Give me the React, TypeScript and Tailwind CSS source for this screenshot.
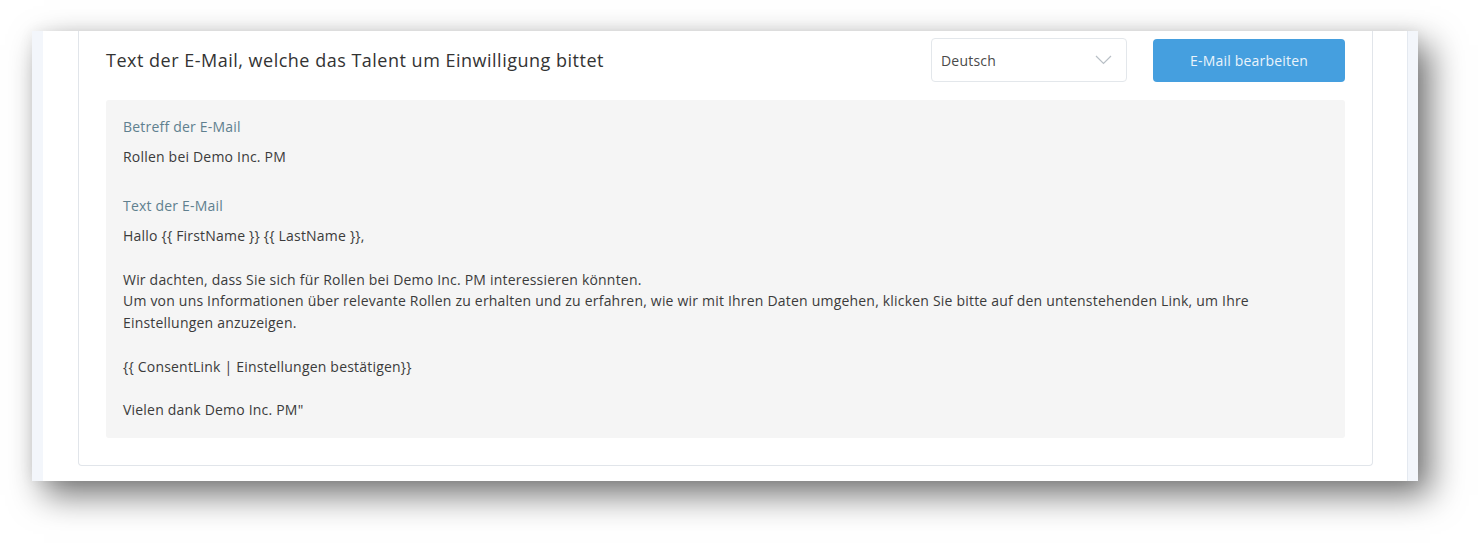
import React from "react";

const font = { fontFamily: "'Open Sans', Lato, sans-serif" };

export default function App() {
  const lines = [
    "Hallo {{ FirstName }} {{ LastName }},",
    "",
    "Wir dachten, dass Sie sich für Rollen bei Demo Inc. PM interessieren könnten.",
    "Um von uns Informationen über relevante Rollen zu erhalten und zu erfahren, wie wir mit Ihren Daten umgehen, klicken Sie bitte auf den untenstehenden Link, um Ihre",
    "Einstellungen anzuzeigen.",
    "",
    "{{ ConsentLink | Einstellungen bestätigen}}",
    "",
    "Vielen dank Demo Inc. PM\"",
  ];
  return (
    <div className="w-[1480px] h-[544px] bg-white overflow-hidden pt-[31px] pl-[32px]" style={font}>
      <div className="w-[1386px] h-[450px] flex bg-white shadow-[12px_14px_32px_rgba(0,0,0,0.55),0_0_14px_rgba(0,0,0,0.06)]">
        <div className="w-[11px] bg-[#f3f6fb]" />
        <div className="flex-1 bg-white pl-[35px] pr-[34px]">
          <div className="border-x border-b border-[#e1e5ea] rounded-b-[4px] px-[27px] pt-[7px] pb-[27px]">
            <div className="flex items-center h-[44px]">
              <div className="flex-1 text-[18px] text-[#333] tracking-[0.5px]">
                Text der E-Mail, welche das Talent um Einwilligung bittet
              </div>
              <div className="w-[196px] h-[44px] border border-[#e3e7eb] rounded-[4px] flex items-center justify-between pl-[9px] pr-[14px] text-[14px] text-[#4a4a4a] tracking-[0.2px]">
                <span>Deutsch</span>
                <svg width="17" height="10" viewBox="0 0 17 10" fill="none">
                  <path d="M1 1 L8.5 8.5 L16 1" stroke="#b8bfc6" strokeWidth="1.2" />
                </svg>
              </div>
              <div className="ml-[26px] w-[192px] h-[43px] rounded-[4px] bg-[#459fdf] text-[#eaf4fb] text-[14px] tracking-[0.2px] flex items-center justify-center">
                E-Mail bearbeiten
              </div>
            </div>
            <div className="mt-[18px] bg-[#f5f5f5] rounded-[3px] pl-[17px] pt-[16px] pb-[17px] text-[14px] text-[#3b3b3b] tracking-[0.2px]">
              <div className="text-[#60808f] leading-[22px]">Betreff der E-Mail</div>
              <div className="mt-[8px] leading-[22px]">Rollen bei Demo Inc. PM</div>
              <div className="mt-[27px] text-[#60808f] leading-[22px]">Text der E-Mail</div>
              <div className="mt-[8px] leading-[21.75px]">
                {lines.map((l, i) => (
                  <div key={i} className="h-[21.75px] whitespace-nowrap">
                    {l || "\u00a0"}
                  </div>
                ))}
              </div>
            </div>
          </div>
        </div>
        <div className="w-[11px] bg-[#f3f6fb] border-l border-[#e4e9f0]" />
      </div>
    </div>
  );
}
